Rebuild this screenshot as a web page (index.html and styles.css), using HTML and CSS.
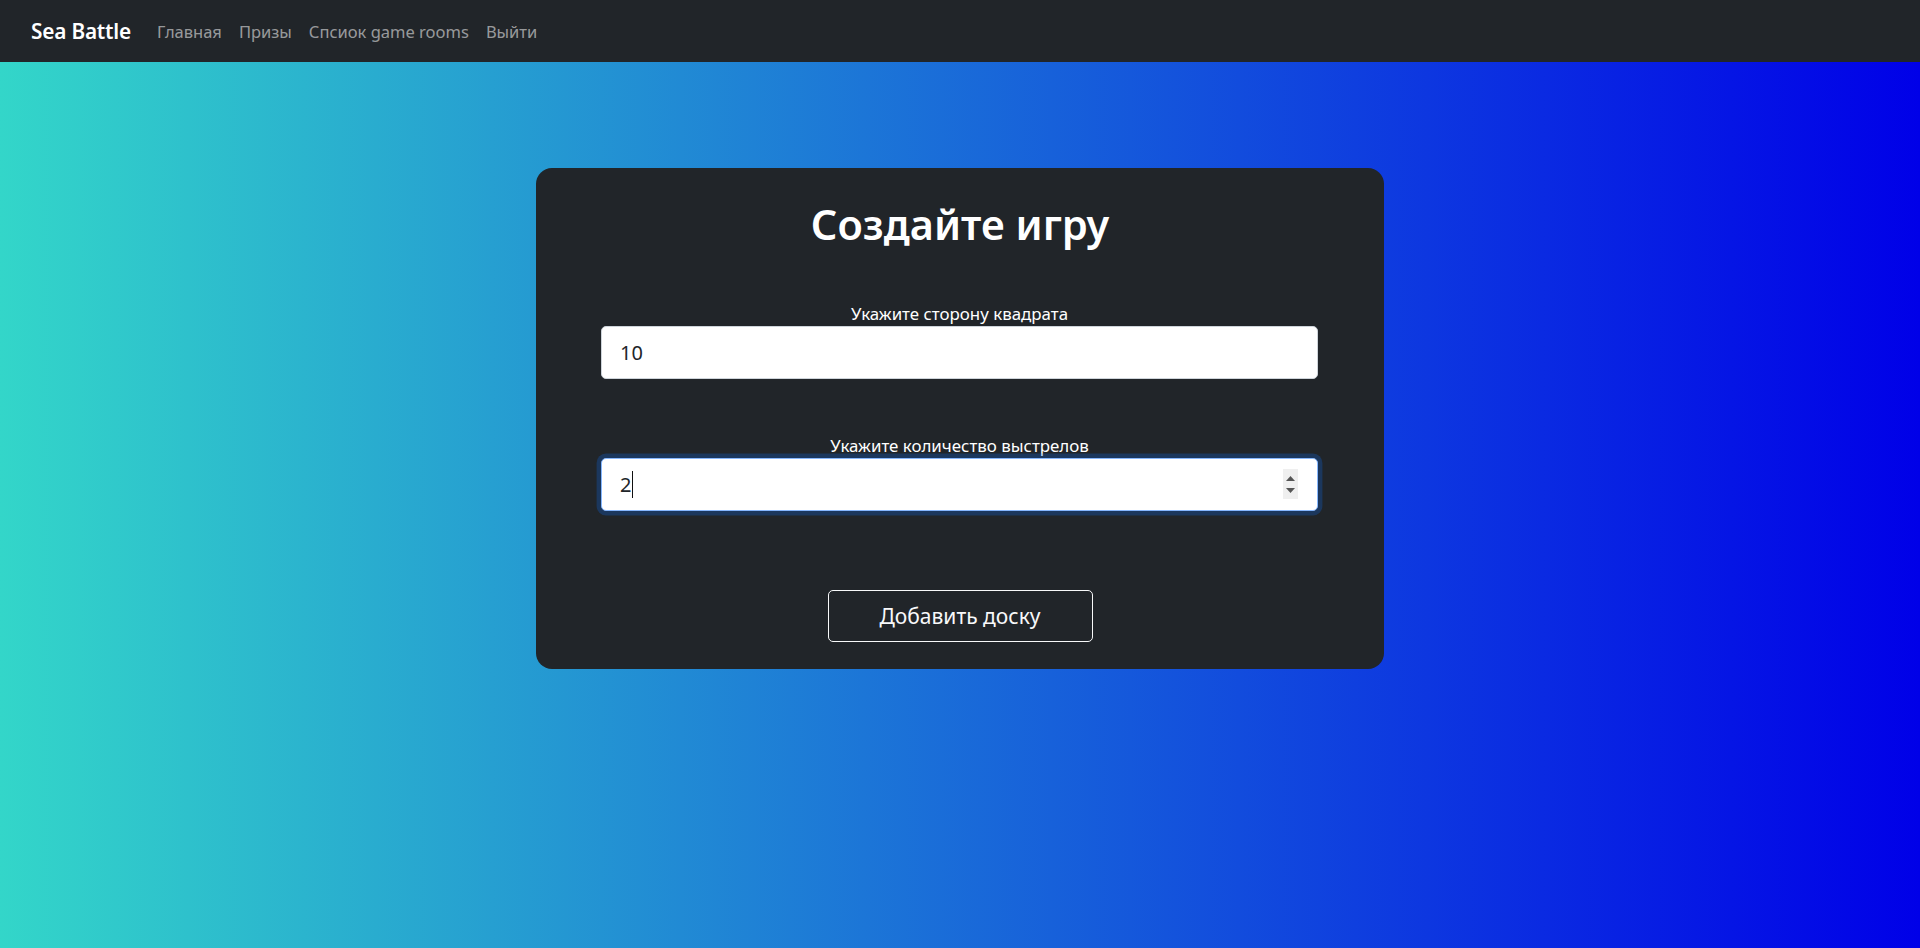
FILE: index.html
```html
<!DOCTYPE html>
<html lang="ru">
<head>
<meta charset="utf-8">
<title>Sea Battle</title>
<link rel="stylesheet" href="styles.css">
</head>
<body>
<nav class="navbar">
  <a class="brand" href="#">Sea Battle</a>
  <ul class="nav-links">
    <li><a href="#">Главная</a></li>
    <li><a href="#">Призы</a></li>
    <li><a href="#">Спсиок game rooms</a></li>
    <li><a href="#">Выйти</a></li>
  </ul>
</nav>
<main class="page">
  <form class="card">
    <h1 class="title">Создайте игру</h1>
    <div class="field field-first">
      <label class="label" for="side">Укажите сторону квадрата</label>
      <input class="input" id="side" type="text" value="10">
    </div>
    <div class="field field-second">
      <label class="label" for="shots">Укажите количество выстрелов</label>
      <div class="input-wrap">
        <input class="input input-focus" id="shots" type="text" value="2">
        <span class="caret"></span>
        <span class="spinner">
          <svg width="9" height="5" viewBox="0 0 9 5"><path d="M4.5 0 L9 5 L0 5 Z" fill="#555"/></svg>
          <svg width="9" height="5" viewBox="0 0 9 5"><path d="M0 0 L9 0 L4.5 5 Z" fill="#555"/></svg>
        </span>
      </div>
    </div>
    <div class="actions">
      <button class="btn" type="button">Добавить доску</button>
    </div>
  </form>
</main>
</body>
</html>
```
FILE: styles.css
```css
* { box-sizing: border-box; }
html, body { margin: 0; padding: 0; }
body {
  min-height: 948px;
  font-family: "Segoe UI", "Noto Sans", "Open Sans", sans-serif;
  background: linear-gradient(to right, #33d6c9 0%, #0000e8 100%);
  color: #fff;
}
.navbar {
  height: 62px;
  background: #212529;
  display: flex;
  align-items: center;
  padding: 0 31px;
}
.brand {
  color: #fff;
  text-decoration: none;
  font-size: 20.8px;
  font-weight: 600;
  margin-right: 26px;
  letter-spacing: -0.2px;
}
.nav-links {
  list-style: none;
  margin: 0;
  padding: 0;
  display: flex;
  gap: 17px;
}
.nav-links a {
  color: rgba(255,255,255,.55);
  text-decoration: none;
  font-size: 16.5px;
  letter-spacing: 0;
}
.page {
  display: flex;
  justify-content: center;
  padding-top: 106px;
}
.card {
  width: 848px;
  background: #212529;
  border-radius: 16px;
  padding: 30px 0 27px;
  text-align: center;
}
.title {
  margin: 0;
  font-size: 41.5px;
  line-height: 53px;
  font-weight: 600;
}
.field { padding: 0 66px 0 65px; }
.field-first { margin-top: 50px; }
.field-second { margin-top: 54px; }
.label {
  display: block;
  font-size: 16.9px;
  line-height: 25px;
}
.input {
  display: block;
  width: 100%;
  height: 53px;
  padding: 0 18px;
  font-family: inherit;
  font-size: 20px;
  color: #212529;
  background: #fff;
  border: 1px solid #ced4da;
  border-radius: 5px;
  outline: none;
}
.input-wrap { position: relative; }
.input-focus {
  border-color: #86b7fe;
  box-shadow: 0 0 0 4.4px rgba(13,110,253,.25);
}
.caret {
  position: absolute;
  left: 31px;
  top: 13px;
  width: 1px;
  height: 27px;
  background: #111;
}
.spinner {
  position: absolute;
  right: 20px;
  top: 11px;
  width: 15px;
  height: 30px;
  background: #efefef;
  display: flex;
  flex-direction: column;
  align-items: center;
  justify-content: center;
  gap: 7px;
}
.actions {
  display: flex;
  justify-content: center;
  margin-top: 79px;
}
.btn {
  width: 265px;
  height: 52px;
  background: transparent;
  border: 1px solid #f8f9fa;
  border-radius: 5px;
  color: #f8f9fa;
  font-family: inherit;
  font-size: 21px;
}
```
